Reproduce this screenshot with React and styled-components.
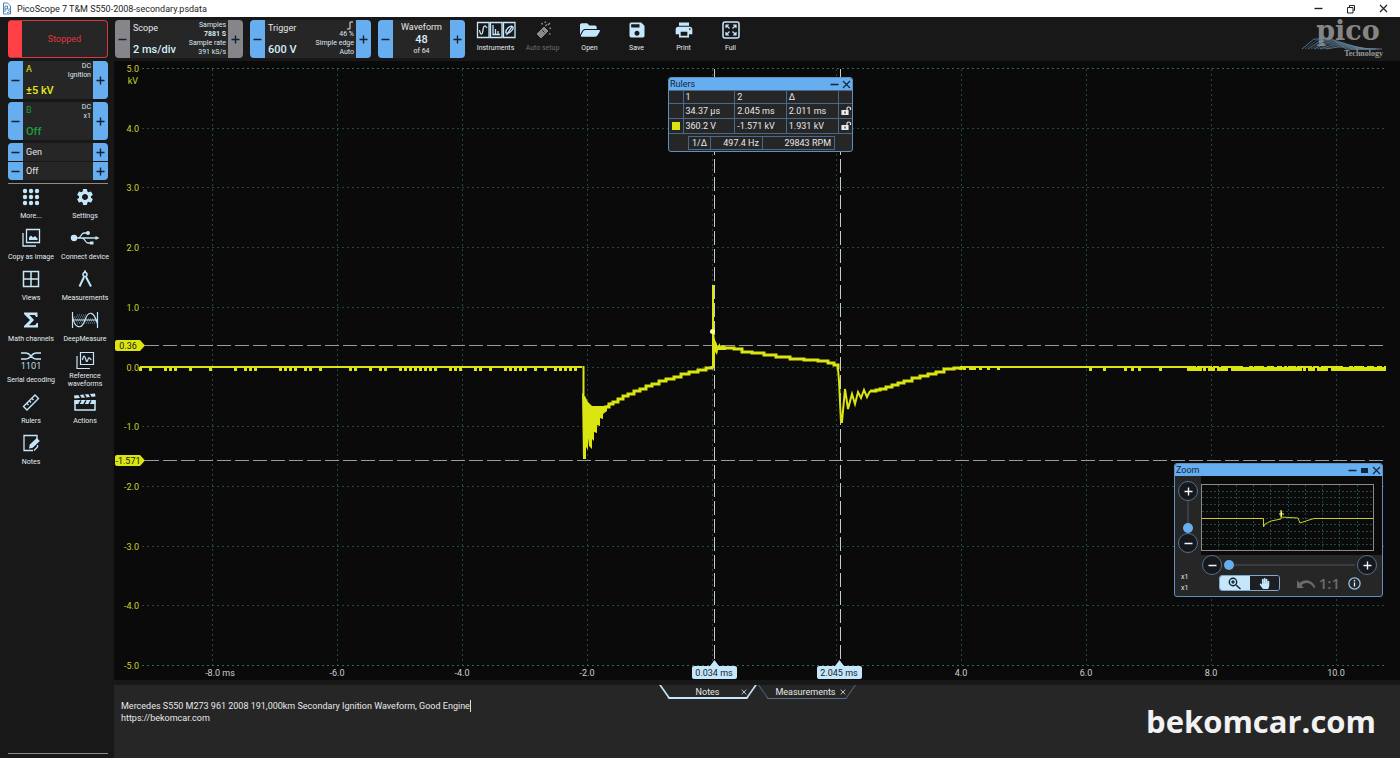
import React from "react";
import styled, { createGlobalStyle } from "styled-components";
import { MdSettings, MdSave, MdPrint } from "react-icons/md";
import { FaFolderOpen, FaHandPaper } from "react-icons/fa";

const ui = `Roboto, "Open Sans", sans-serif`;
const blue = "#67aef0";
const pale = "#c5e7fb";
const yellow = "#dbe512";

const GlobalStyle = createGlobalStyle`
  * { box-sizing: border-box; }
  body { margin: 0; background: #181818; color: #e8e8e8; font: 9px/12px ${ui}; }
  button, input, textarea { font: inherit; color: inherit; }
  button { padding: 0; border: 0; background: none; cursor: pointer; }
  svg { display: block; }
`;

const Page = styled.div`
  display: flex;
  flex-direction: column;
  min-height: 100vh;
`;

/* window title */

const TitleBar = styled.header`
  display: flex;
  align-items: center;
  gap: 5px;
  height: 17px;
  padding: 0 12px 0 2px;
  background: #fff;
  color: #222;
  h1 {
    flex: 1;
    margin: 0;
    font-size: 9px;
    font-weight: 400;
  }
`;

const WindowButtons = styled.div`
  display: flex;
  gap: 23px;
`;

/* top bar */

const TopBar = styled.div`
  display: flex;
  align-items: flex-start;
  gap: 7px;
  height: 44px;
  padding: 3px 11px 0 8px;
`;

const StatusButton = styled.button`
  width: 100px;
  height: 38px;
  border: 1px solid #d23a3e;
  border-left: 14px solid #ff4147;
  border-radius: 4px;
  background: #262626;
  color: #e0383c;
`;

const Box = styled.div`
  display: flex;
  width: ${(p) => p.$width};
  height: 38px;
  border-radius: 4px;
  overflow: hidden;
  background: #262626;
`;

const Step = styled.button`
  flex: none;
  width: 15px;
  background: ${(p) => (p.$off ? "#85858a" : blue)};
  color: #123;
  svg { margin: 0 auto; }
`;

const BoxBody = styled.div`
  flex: 1;
  display: flex;
  justify-content: ${(p) => (p.$center ? "center" : "space-between")};
  padding: 0 2px 0 ${(p) => (p.$center ? 2 : 3)}px;
  color: ${(p) => p.$color || "#e8e8e8"};
`;

const Main = styled.div`
  display: flex;
  flex-direction: column;
  justify-content: space-between;
  padding: ${(p) => (p.$center ? 1 : 2)}px 0 1px;
  text-align: ${(p) => (p.$center ? "center" : "left")};
  b {
    font-size: 11px;
    font-weight: 500;
    line-height: ${(p) => (p.$center ? 12 : 15)}px;
    color: ${(p) => p.$value || "inherit"};
  }
  small {
    font-size: 7px;
    line-height: 11px;
  }
`;

const Details = styled.div`
  display: flex;
  flex-direction: column;
  align-items: flex-end;
  padding-top: 1px;
  font-size: 7px;
  line-height: 9px;
  color: #dce9f2;
`;

const Tools = styled.nav`
  display: flex;
  flex: 1;
`;

const TopTool = styled.button`
  display: flex;
  flex-direction: column;
  align-items: center;
  gap: 2px;
  width: 47px;
  font-size: 7px;
  color: ${(p) => (p.disabled ? "#6c6c6c" : "#e3edf3")};
  svg { color: ${(p) => (p.disabled ? "#8a8a8a" : pale)}; }
`;

/* body */

const Body = styled.div`
  flex: 1;
  display: flex;
`;

const Sidebar = styled.aside`
  display: flex;
  flex-direction: column;
  gap: 3px;
  width: 114px;
  padding: 0 6px 4px 8px;
`;

const GenBox = styled.div`
  display: grid;
  gap: 1px;
  border-radius: 4px;
  overflow: hidden;
`;

const GenRow = styled.div`
  display: flex;
  height: 18px;
  background: #262626;
  line-height: 18px;
  span {
    flex: 1;
    padding-left: 3px;
  }
`;

const Rule = styled.hr`
  width: 100%;
  margin: ${(p) => (p.$last ? "auto 0 0" : 0)};
  border: 0;
  border-top: 1px solid #8b8b8b;
`;

const ToolGrid = styled.div`
  display: grid;
  grid-template-columns: 54px 54px;
  grid-auto-rows: 41px;
  margin: 0 -4px;
`;

const SideTool = styled.button`
  display: flex;
  flex-direction: column;
  align-items: center;
  gap: ${(p) => (p.$tall ? 1 : 4)}px;
  font-size: 7px;
  line-height: ${(p) => (p.$tall ? 8 : 10)}px;
  color: #e3edf3;
  svg { color: ${pale}; }
`;

const Content = styled.main`
  flex: 1;
  display: flex;
  flex-direction: column;
  gap: 5px;
  min-width: 0;
`;

const ChartArea = styled.section`
  position: relative;
  background: #0a0a0b;
  > svg {
    width: 100%;
    height: auto;
  }
  text {
    font: 9px Roboto, sans-serif;
  }
`;

/* floating windows */

const Floating = styled.section`
  position: absolute;
  border: 1px solid #5f8fbe;
  border-radius: 3px;
  background: #262626;
  overflow: hidden;
`;

const RulersWindow = styled(Floating)`
  top: 16px;
  left: calc(50% - 89px);
  width: 185px;
`;

const ZoomWindow = styled(Floating)`
  right: 17px;
  bottom: 83px;
  width: 209px;
`;

const FloatTitle = styled.div`
  display: flex;
  align-items: center;
  gap: 3px;
  height: 12px;
  padding: 0 1px;
  background: ${blue};
  color: #10263a;
  h2 {
    flex: 1;
    margin: 0;
    font-size: 9px;
    font-weight: 400;
  }
`;

const RulerTable = styled.table`
  width: 100%;
  table-layout: fixed;
  border-collapse: collapse;
  th, td {
    height: 15px;
    padding: 0 0 0 2px;
    border: 1px solid #47698a;
    font-weight: 400;
    line-height: 12px;
    text-align: left;
  }
  tr:first-child > * { height: 13px; }
  tr > :first-child { border-left: 0; }
  tr > :last-child { border-right: 0; }
`;

const Swatch = styled.i`
  display: block;
  width: 8px;
  height: 8px;
  margin-left: 1px;
  background: ${yellow};
`;

const RateRow = styled.dl`
  display: flex;
  height: 14px;
  margin: 2px 17px 1px 19px;
  border: 1px solid #47698a;
  line-height: 12px;
  dt, dd {
    margin: 0;
    padding: 0 3px 0 2px;
    text-align: right;
  }
  dt { width: 21px; }
  dd {
    border-left: 1px solid #47698a;
    width: 52px;
  }
  dd:last-child { flex: 1; }
`;

const ZoomTop = styled.div`
  display: flex;
`;

const ZoomLevels = styled.div`
  display: flex;
  flex-direction: column;
  align-items: center;
  width: 26px;
  padding-top: 5px;
`;

const MiniMap = styled.div`
  flex: 1;
  padding: 8px 8px 4px 0;
  background: #0a0a0b;
`;

const RoundButton = styled.button`
  flex: none;
  display: grid;
  place-items: center;
  width: 20px;
  height: 20px;
  border: 1px solid #55718c;
  border-radius: 50%;
  background: #15181c;
  color: #eef6fb;
`;

const Slider = styled.input`
  appearance: none;
  margin: 0;
  background: none;
  ${(p) =>
    p.$vertical
      ? "writing-mode: vertical-lr; direction: rtl; width: 12px; height: 32px;"
      : "flex: 1; min-width: 0; height: 12px;"}
  &::-webkit-slider-runnable-track {
    background: linear-gradient(#3c3c40, #3c3c40) center / ${(p) => (p.$vertical ? "2px 100%" : "100% 2px")} no-repeat;
  }
  &::-webkit-slider-thumb {
    appearance: none;
    width: 10px;
    height: 10px;
    border-radius: 50%;
    background: ${blue};
  }
`;

const ZoomPan = styled.div`
  display: flex;
  align-items: center;
  gap: 2px;
  padding: 0 5px 0 27px;
`;

const ZoomActions = styled.div`
  display: flex;
  align-items: center;
  height: 16px;
  margin-bottom: 5px;
  padding: 0 21px 0 6px;
`;

const Factors = styled.div`
  width: 38px;
  font-size: 7px;
  line-height: 11px;
`;

const Segments = styled.div`
  display: flex;
  width: 61px;
  height: 16px;
  margin-right: auto;
  border: 1px solid #7fa9cc;
  border-radius: 3px;
  overflow: hidden;
`;

const Segment = styled.button`
  flex: 1;
  display: grid;
  place-items: center;
  background: ${(p) => (p.$active ? pale : "#1c1e22")};
  color: ${(p) => (p.$active ? "#15222e" : pale)};
`;

const Muted = styled.button`
  padding-right: ${(p) => p.$gap}px;
  font: 600 15px/16px "Open Sans", sans-serif;
  color: #6b6b6b;
`;

/* notes */

const NotesPanel = styled.section`
  flex: 1;
  display: flex;
  flex-direction: column;
  background: #262626;
`;

const Tabs = styled.div`
  display: flex;
  justify-content: center;
  gap: 1px;
`;

const Tab = styled.div`
  position: relative;
  display: flex;
  justify-content: flex-end;
  align-items: center;
  gap: ${(p) => (p.$active ? 21 : 4)}px;
  width: 98px;
  height: 14px;
  padding-right: 10px;
  &::before, &::after {
    content: "";
    position: absolute;
    top: 0;
    bottom: 0;
    width: 46px;
    pointer-events: none;
    border: 0 solid ${(p) => (p.$active ? pale : "#56708a")};
    border-bottom-width: ${(p) => (p.$active ? 2 : 1)}px;
  }
  &::before {
    left: 5px;
    border-left-width: ${(p) => (p.$active ? 2 : 1)}px;
    transform: skewX(35deg);
  }
  &::after {
    right: 5px;
    border-right-width: ${(p) => (p.$active ? 2 : 1)}px;
    transform: skewX(-35deg);
  }
`;

const Editor = styled.div`
  position: relative;
  flex: 1;
  display: flex;
`;

const NoteText = styled.textarea`
  flex: 1;
  padding: 1px 7px;
  border: 0;
  outline: 0;
  resize: none;
  background: none;
  line-height: 12px;
`;

const Caret = styled.i`
  position: absolute;
  left: 356px;
  top: 1px;
  width: 1px;
  height: 12px;
  background: #ddd;
`;

const Watermark = styled.div`
  position: absolute;
  right: 24px;
  bottom: 18px;
  font: 700 31px/38px "Open Sans", sans-serif;
  color: #f2f2f2;
`;

/* icons */

const Icon = ({ w = 20, h = 20, box, fill = "none", sw = 1.5, children }) => (
  <svg width={w} height={h} viewBox={box || `0 0 ${w} ${h}`} fill={fill} stroke={fill === "none" ? "currentColor" : "none"} strokeWidth={sw} aria-hidden="true">
    {children}
  </svg>
);

const Sign = ({ plus, size = 9 }) => (
  <Icon w={size} h={size} box="0 0 9 9" sw={1.4}>
    <path d={plus ? "M.5 4.500h8M4.500 .5v8" : "M.5 4.500h8"} />
  </Icon>
);

const Cross = ({ size = 9 }) => (
  <Icon w={size} h={size} box="0 0 9 9" sw={1.2}>
    <path d="M1 1l7 7M8 1l-7 7" />
  </Icon>
);

const InstrumentsIcon = () => (
  <Icon w={40} h={20} sw={1.3}>
    <path d="M1.500 2.500h11.500v15h-11.500zM14.500 2.500h11.500v15h-11.500zM27.500 2.500h11.500v15h-11.500z" />
    <path d="M3.500 10c1 6 3 5 3.500 0s2-5 4-2M17 5v9.500h7M19.500 14V9M22 14v-3M30 13c-1-3 4-8 6.500-6.500s-3 8-6.500 6.500zM30.500 15l6-9" />
  </Icon>
);

const WandIcon = () => (
  <Icon sw={1}>
    <path d="M4 14l7-7 4 4-7 7z" fill="currentColor" />
    <path d="M9.500 10.500l2 2" stroke="#181818" />
    <path d="M12.500 6l1.500-1.500M8.500 3l1 1.500M16 13.500l1.500 1M17 3l-2 2M12 1.500l.5 1.500M18 8.500l-1.500-.5" strokeWidth="1.500" />
  </Icon>
);

const FullIcon = () => (
  <Icon>
    <rect x="2" y="2" width="16" height="16" rx="2" />
    <path d="M5 8V5h3M5 5l3.500 3.500M12 5h3v3M15 5l-3.500 3.500M5 12v3h3M5 15l3.500-3.500M12 15h3v-3M15 15l-3.500-3.500" strokeWidth="1.200" />
  </Icon>
);

const DotsIcon = () => (
  <Icon fill="currentColor">
    {[4, 10, 16].map((y) => [4, 10, 16].map((x) => <circle key={x + "-" + y} cx={x} cy={y} r="2.200" />))}
  </Icon>
);

const CopyIcon = () => (
  <Icon>
    <path d="M5.500 1.500h13v13h-13zM2 5v13h13" strokeWidth="1.300" />
    <path d="M8 12V9.500l2-2 2 2 2-1.500 2.500 2.500V12z" fill="currentColor" stroke="none" />
  </Icon>
);

const UsbIcon = () => (
  <Icon w={30} h={20} sw={1.3}>
    <path d="M3 10h24M8 10c3 0 3-5 6-5h3M12 10c3 0 3 5 6 5h2" />
    <circle cx="4" cy="10" r="2.600" fill="currentColor" />
    <circle cx="18" cy="5" r="1.300" fill="currentColor" />
    <path d="M20 13.500h3.500v3H20zM25.500 8l4 2-4 2z" fill="currentColor" stroke="none" />
  </Icon>
);

const ViewsIcon = () => (
  <Icon>
    <path d="M2.500 2.500h15v15h-15zM10 2.500v15M2.500 10h15" />
  </Icon>
);

const CompassIcon = () => (
  <Icon>
    <circle cx="10" cy="5.500" r="2" />
    <path d="M10 1.500v2M9 8L4.500 17.500M11 8l5 9.500" strokeWidth="2" />
  </Icon>
);

const SigmaIcon = () => (
  <Icon fill="currentColor">
    <path d="M3 2.500h13.500v4.500h-1.500c-.3-1.500-1-2-2.500-2H8.500l4.500 5-5 5.200h5c1.500 0 2.200-.7 2.500-2.200h1.500v4.500H3v-1.500l6-6-6-6z" />
  </Icon>
);

const DeepIcon = () => (
  <Icon w={28} h={20} sw={1.2}>
    <path d="M1.500 2v16M26.500 2v16M1.500 6c2 13 9 14 12.500 4s9-9 12.500 4" />
    <path d="M6 5h9M3 7h11M4 9h9M15 9h10M5 11h8M14 11h11M6 13h6M13 13h12" strokeWidth="1" strokeDasharray="1 1" opacity="0.600" />
    <path d="M2 10h24" strokeWidth="1" />
  </Icon>
);

const SerialIcon = () => (
  <Icon w={24} h={20}>
    <path d="M2 2h5c5 0 5 6 10 6h5M2 8h5c5 0 5-6 10-6h5" />
    <text x="12" y="18" textAnchor="middle" fontFamily="Open Sans" fontSize="9" fill="currentColor" stroke="none">1101</text>
  </Icon>
);

const ReferenceIcon = () => (
  <Icon>
    <path d="M5.500 1.500h13v12h-13zM2 5v12.500h13M7.500 9c1-6 2.500-4 3.500 0s2-1 2.500-2 2 1 3 2" strokeWidth="1.200" />
  </Icon>
);

const RulersIcon = () => (
  <Icon sw={1.4}>
    <path d="M2.500 14.500L14 3l3.500 3.500L6 18zM6 11.500l1.500 1.500M8.500 9L10 10.500M11 6.500L12.500 8" />
  </Icon>
);

const ActionsIcon = () => (
  <Icon w={24} h={20}>
    <path d="M2 9h20v9H2z" />
    <path d="M1 3.500l21-2 .5 3L1.500 6.500zM1.500 8h21v4h-21z" fill="currentColor" stroke="none" />
    <path d="M6 3l2 3M11 2.500l2 3M16 2l2 3M8 8.500L6 12M13 8.500L11 12M18 8.500L16 12" stroke="#181818" />
  </Icon>
);

const NotesIcon = () => (
  <Icon sw={1.3}>
    <path d="M12 17.500H3v-15h13V6M16.500 12v2L13 17.500" />
    <path d="M8 15.500l.8-4 7-6.500 3 3-7 6.800z" fill="currentColor" stroke="none" />
  </Icon>
);

const LockIcon = () => (
  <Icon w={11} h={10} sw={1.2}>
    <path d="M1 4.500h6v4H1z" fill="#e8f3fa" />
    <path d="M6 4.500V2.500c0-2 3.500-2 3.500 0V4" />
    <path d="M4 5.500v2" stroke="#222" />
  </Icon>
);

const MagnifierIcon = () => (
  <Icon w={13} h={13} sw={1.4}>
    <circle cx="5" cy="5" r="3.700" />
    <path d="M8 8l4.500 4M3.300 5h3.400M5 3.300v3.400" />
  </Icon>
);

const UndoIcon = () => (
  <Icon w={20} h={11} fill="currentColor">
    <path d="M1 2v8h7L5.500 7.500c4-4 9-3 12.500 2.500l1.500-.8C16 1.500 8.500.5 3.500 5z" />
  </Icon>
);

const InfoIcon = () => (
  <Icon w={13} h={13} sw={1.3}>
    <circle cx="6.500" cy="6.500" r="5.600" stroke="#8fc4f2" />
    <path d="M6.500 5.500v4M6.500 3v1.500" stroke="#e8f3fa" />
  </Icon>
);

const AppIcon = () => (
  <Icon w={10} h={13} sw={1}>
    <path d="M1.500 1h4l3 3v8h-7zM3 10V4h2.500v3H3M8 7c-3 0-2 2-1 2s1 2-2 1.500" stroke="#4b87b5" />
  </Icon>
);

const LogoBox = styled.div`
  width: 87px;
  height: 41px;
  svg { overflow: visible; }
`;

const Logo = () => (
  <LogoBox>
    <svg width="87" height="41" viewBox="0 0 87 41" role="img" aria-label="pico Technology">
      <text x="46" y="20" textAnchor="middle" fontFamily="DejaVu Serif" fontWeight="700" fontSize="27" fill="#858585">pico</text>
      {[0, 1, 2, 3, 4, 5, 6, 7, 8].map((i) => (
        <path
          key={i}
          d={`M${i * 3} 29l12 -${10 - i}h18l14 ${10 - i}h12`}
          fill="none"
          stroke={i % 2 ? "#3f6a8c" : "#7f97a8"}
          strokeWidth="0.700"
        />
      ))}
      <text x="81" y="36" textAnchor="end" fontFamily="Liberation Serif" fontWeight="700" fontSize="8" fill="#9a9a9a">Technology</text>
    </svg>
  </LogoBox>
);

/* chart */

const toX = (ms) => Math.floor(598 + 62.4 * ms);
const toY = (kv) => Math.floor(306 - 59.7 * kv);

const line = (points) => "M" + points.map((p) => p.join(" ")).join("L");

// small downward ticks of the converter around zero
const baseline = (from, to, y, step, depth) => {
  const points = [];
  let seed = 7;
  for (let x = from; x < to; x += step) {
    seed = (seed * 73 + 41) % 101;
    points.push([x, y]);
    if (seed > 42) points.push([x, y + depth], [x + 1, y + depth], [x + 1, y]);
  }
  points.push([to, y]);
  return points;
};

const stepped = (points) => {
  const out = [points[0]];
  for (let i = 1; i < points.length; i++) out.push([points[i][0], points[i - 1][1]], points[i]);
  return out;
};

const rise = [
  [490, 346], [495, 343], [499, 341], [504, 338], [509, 335], [514, 333], [520, 330], [526, 328],
  [532, 325], [538, 323], [545, 320], [552, 318], [560, 316], [567, 313], [575, 311], [584, 309],
  [592, 307], [598, 305],
];

const burn = [
  [601, 286], [606, 287], [614, 287], [620, 288], [628, 291], [638, 292], [650, 294],
  [662, 296], [676, 298], [690, 299], [704, 300], [714, 302], [720, 304], [724, 308],
];

const ringing = [
  [724, 308], [725, 320], [727, 361], [728, 361], [731, 328], [734, 348], [738, 333], [741, 343],
  [744, 331], [747, 337], [750, 329], [753, 336], [756, 330],
];

const recovery = [
  [756, 330], [762, 329], [766, 328], [772, 326], [778, 324], [784, 322], [790, 320], [798, 317],
  [806, 315], [814, 313], [822, 311], [830, 308], [840, 307], [850, 307],
];

const Chart = () => {
  const volts = [5, 4, 3, 2, 1, 0, -1, -2, -3, -4, -5];
  const times = [-8, -6, -4, -2, 0, 2, 4, 6, 8, 10];
  return (
    <svg viewBox="0 0 1286 619" role="img" aria-label="Secondary ignition waveform">
      <g stroke="#1f4a42" strokeDasharray="2 3" fill="none">
        {volts.map((v) => (
          <path key={v} d={`M28 ${toY(v) + 0.5}H1272`} stroke={Math.abs(v) === 5 ? "#2c6a5a" : undefined} />
        ))}
        {times.map((t) => (
          <path key={t} d={`M${toX(t) + 0.5} 8V604`} />
        ))}
      </g>
      <g fill="#c9d32a" textAnchor="end">
        {volts.map((v) => (
          <text key={v} x="25" y={toY(v) + 4}>{v.toFixed(1)}</text>
        ))}
        <text x="24" y="23">kV</text>
      </g>
      <g fill="#d0d0d0" textAnchor="middle">
        {times.filter((t) => t !== 0 && t !== 2).map((t) => (
          <text key={t} x={toX(t) + (t === -8 ? 8 : 0)} y="615">
            {t.toFixed(1) + (t === -8 ? " ms" : "")}
          </text>
        ))}
      </g>
      <g stroke="#9a9a9a" strokeDasharray="14 4" fill="none">
        <path d={`M31 ${toY(0.36) + 0.5}H1272M31 ${toY(-1.571) + 0.5}H1272`} />
        <path d={`M${toX(0.034) + 0.5} 8V600M${toX(2.045) + 1.5} 8V600`} stroke="#c9c9c9" />
      </g>
      <g fill="none" stroke={yellow} strokeWidth="2">
        <path d={line(baseline(26, 468, 306, 5, 3))} />
        <path d="M469.500 305V334" />
        <path d={line(stepped(rise))} strokeWidth="3" />
        <path d="M599 224V307" />
        <path d={line(stepped(burn))} strokeWidth="3" />
        <path d={line(ringing)} />
        <path d={line(stepped(recovery))} strokeWidth="3" />
        <path d={line(baseline(846, 886, 306, 2, 2))} />
        <path d={line(baseline(886, 976, 306, 90, 0))} />
        <path d={line(baseline(976, 1076, 306, 7, 3))} />
        <path d={line(baseline(1076, 1272, 306, 1, 3))} />
      </g>
      <path
        d="M468 332L471 335L474 341L478 345H492L497 341V344L493 347V350L489 353V358L486 357V365L483 364V372L480 371V380L478 378V388L475 385L474 377V389L472 386V398H469Z"
        fill={yellow}
      />
      <path d="M598 272H600L601 279L603 283V286L606 282V287L609 284L612 286V289H604L603 294L601 291V300L600 307H598Z" fill={yellow} />
      <circle cx="598.500" cy="270.500" r="2.500" fill="#ffff9a" />
      {[0.36, -1.571].map((v) => (
        <g key={v} transform={`translate(1 ${toY(v) - 5})`}>
          <path d="M2 0H25L30 5.500L25 11H2Q0 11 0 9V2Q0 0 2 0Z" fill={yellow} />
          <text x="13" y="9" textAnchor="middle" fill="#20220a">{v}</text>
        </g>
      ))}
      {[0.034, 2.045].map((t) => (
        <g key={t} transform={`translate(${toX(t) - 22} 599)`}>
          <path d="M2 6H18L22.500 0L27 6H43Q45 6 45 8V17Q45 19 43 19H2Q0 19 0 17V8Q0 6 2 6Z" fill={pale} />
          <text x="22" y="16" textAnchor="middle" fill="#16242e">{t.toFixed(3)} ms</text>
        </g>
      ))}
    </svg>
  );
};

const MiniChart = () => (
  <svg width="100%" viewBox="0 0 173 67" aria-hidden="true">
    <rect x="0.500" y="0.500" width="172" height="66" fill="none" stroke="#8a8a8a" />
    <g stroke="#1f4a42" strokeDasharray="2 2">
      {[1, 2, 3, 4, 5, 6, 7, 8, 9].map((i) => (
        <g key={i}>
          <path d={`M1 ${Math.round(i * 6.7) + 0.5}H172`} />
          <path d={`M${Math.round(i * 17.3) + 0.5} 1V66`} />
        </g>
      ))}
    </g>
    <path d="M1 34.500H62.500V43L64 40L70 37L80 35V26V33L97 34L99 39L108 36L113 34.500H172" fill="none" stroke="#c5cf2a" />
    <path d="M80.500 27.500v5M78 30h5" stroke="#ffff9a" />
  </svg>
);

/* composed parts */

const Stepper = ({ label, width, off, body }) => (
  <Box $width={width}>
    <Step $off={off} aria-label={`${label} down`}><Sign /></Step>
    {body}
    <Step $off={off} aria-label={`${label} up`}><Sign plus /></Step>
  </Box>
);

const sideTools = [
  ["More...", <DotsIcon />],
  ["Settings", <MdSettings size={20} />],
  ["Copy as image", <CopyIcon />],
  ["Connect device", <UsbIcon />],
  ["Views", <ViewsIcon />],
  ["Measurements", <CompassIcon />],
  ["Math channels", <SigmaIcon />],
  ["DeepMeasure", <DeepIcon />],
  ["Serial decoding", <SerialIcon />],
  ["Reference waveforms", <ReferenceIcon />],
  ["Rulers", <RulersIcon />],
  ["Actions", <ActionsIcon />],
  ["Notes", <NotesIcon />],
];

const topTools = [
  ["Instruments", <InstrumentsIcon />],
  ["Auto setup", <WandIcon />],
  ["Open", <FaFolderOpen size={20} />],
  ["Save", <MdSave size={20} />],
  ["Print", <MdPrint size={20} />],
  ["Full", <FullIcon />],
];

const channels = [
  { name: "A", value: "±5 kV", color: "#e3ea1a", details: ["DC", "Ignition"] },
  { name: "B", value: "Off", color: "#1f9e3f", details: ["DC", "x1"] },
];

const RulersPanel = () => (
  <RulersWindow aria-label="Rulers">
    <FloatTitle>
      <h2>Rulers</h2>
      <button aria-label="Minimise rulers"><Sign /></button>
      <button aria-label="Close rulers"><Cross /></button>
    </FloatTitle>
    <RulerTable>
      <colgroup>
        <col style={{ width: 14 }} />
        <col />
        <col />
        <col />
        <col style={{ width: 14 }} />
      </colgroup>
      <tbody>
        <tr><td /><th>1</th><th>2</th><th>Δ</th><td /></tr>
        <tr><td /><td>34.37 µs</td><td>2.045 ms</td><td>2.011 ms</td><td><LockIcon /></td></tr>
        <tr><td><Swatch /></td><td>360.2 V</td><td>-1.571 kV</td><td>1.931 kV</td><td><LockIcon /></td></tr>
      </tbody>
    </RulerTable>
    <RateRow>
      <dt>1/Δ</dt>
      <dd>497.4 Hz</dd>
      <dd>29843 RPM</dd>
    </RateRow>
  </RulersWindow>
);

const ZoomPanel = () => (
  <ZoomWindow aria-label="Zoom">
    <FloatTitle>
      <h2>Zoom</h2>
      <button aria-label="Minimise zoom"><Sign /></button>
      <button aria-label="Restore zoom">
        <Icon w={9} h={9} fill="currentColor"><path d="M1 2h7v5H1z" /></Icon>
      </button>
      <button aria-label="Close zoom"><Cross /></button>
    </FloatTitle>
    <ZoomTop>
      <ZoomLevels>
        <RoundButton aria-label="Zoom in vertically"><Sign plus /></RoundButton>
        <Slider type="range" $vertical defaultValue="0" aria-label="Vertical zoom" />
        <RoundButton aria-label="Zoom out vertically"><Sign /></RoundButton>
      </ZoomLevels>
      <MiniMap><MiniChart /></MiniMap>
    </ZoomTop>
    <ZoomPan>
      <RoundButton aria-label="Zoom out horizontally"><Sign /></RoundButton>
      <Slider type="range" defaultValue="0" aria-label="Horizontal zoom" />
      <RoundButton aria-label="Zoom in horizontally"><Sign plus /></RoundButton>
    </ZoomPan>
    <ZoomActions>
      <Factors>x1<br />x1</Factors>
      <Segments>
        <Segment $active aria-label="Zoom tool"><MagnifierIcon /></Segment>
        <Segment aria-label="Pan tool"><FaHandPaper size={11} /></Segment>
      </Segments>
      <Muted $gap={3} aria-label="Undo zoom"><UndoIcon /></Muted>
      <Muted $gap={8}>1:1</Muted>
      <button aria-label="Zoom info"><InfoIcon /></button>
    </ZoomActions>
  </ZoomWindow>
);

const App = () => (
  <Page>
    <GlobalStyle />
    <TitleBar>
      <AppIcon />
      <h1>PicoScope 7 T&amp;M S550-2008-secondary.psdata</h1>
      <WindowButtons>
        <button aria-label="Minimise"><Sign /></button>
        <button aria-label="Restore">
          <Icon w={10} h={10} sw={1}><path d="M1.500 3.500h5.500v5.500h-5.500zM3.500 3V1.500h5v5H7.500" /></Icon>
        </button>
        <button aria-label="Close"><Cross /></button>
      </WindowButtons>
    </TitleBar>
    <TopBar>
      <StatusButton>Stopped</StatusButton>
      <Stepper
        label="Timebase" width="128px" off
        body={
          <BoxBody>
            <Main $value="#d5effd"><span>Scope</span><b>2 ms/div</b></Main>
            <Details><span>Samples</span><strong>7881 S</strong><span>Sample rate</span><span>391 kS/s</span></Details>
          </BoxBody>
        }
      />
      <Stepper
        label="Trigger" width="121px"
        body={
          <BoxBody>
            <Main $value="#d5effd"><span>Trigger</span><b>600 V</b></Main>
            <Details>
              <Icon w={8} h={9} sw={1}><path d="M1 8h3V1h3" /></Icon>
              <span>46 %</span><span>Simple edge</span><span>Auto</span>
            </Details>
          </BoxBody>
        }
      />
      <Stepper
        label="Waveform" width="87px"
        body={
          <BoxBody $center>
            <Main $center $value="#d5effd"><span>Waveform</span><b>48</b><small>of 64</small></Main>
          </BoxBody>
        }
      />
      <Tools>
        {topTools.map(([name, icon]) => (
          <TopTool key={name} disabled={name === "Auto setup"}>{icon}{name}</TopTool>
        ))}
      </Tools>
      <Logo />
    </TopBar>
    <Body>
      <Sidebar>
        {channels.map((c) => (
          <Stepper
            key={c.name} label={`Channel ${c.name}`} width="100%"
            body={
              <BoxBody $color={c.color}>
                <Main><span>{c.name}</span><b>{c.value}</b></Main>
                <Details>{c.details.map((d) => <span key={d}>{d}</span>)}</Details>
              </BoxBody>
            }
          />
        ))}
        <GenBox>
          {["Gen", "Off"].map((text) => (
            <GenRow key={text}>
              <Step aria-label={`${text} previous`}><Sign /></Step>
              <span>{text}</span>
              <Step aria-label={`${text} next`}><Sign plus /></Step>
            </GenRow>
          ))}
        </GenBox>
        <Rule />
        <ToolGrid>
          {sideTools.map(([name, icon]) => (
            <SideTool key={name} $tall={name.startsWith("Reference")}>{icon}{name}</SideTool>
          ))}
        </ToolGrid>
        <Rule $last />
      </Sidebar>
      <Content>
        <ChartArea>
          <Chart />
          <RulersPanel />
          <ZoomPanel />
        </ChartArea>
        <NotesPanel>
          <Tabs>
            <Tab $active>
              <button>Notes</button>
              <button aria-label="Close notes"><Cross size={6} /></button>
            </Tab>
            <Tab>
              <button>Measurements</button>
              <button aria-label="Close measurements"><Cross size={6} /></button>
            </Tab>
          </Tabs>
          <Editor>
            <NoteText
              aria-label="Notes"
              defaultValue={"Mercedes S550 M273 961 2008 191,000km Secondary Ignition Waveform, Good Engine\nhttps://bekomcar.com"}
            />
            <Caret />
            <Watermark>bekomcar.com</Watermark>
          </Editor>
        </NotesPanel>
      </Content>
    </Body>
  </Page>
);

export default App;
